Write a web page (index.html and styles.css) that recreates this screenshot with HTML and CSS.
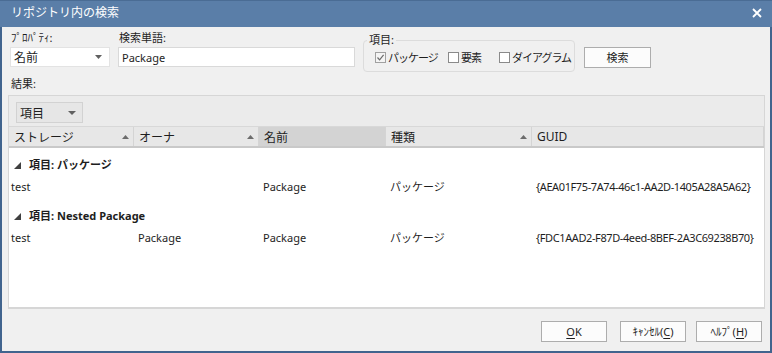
FILE: index.html
```html
<!DOCTYPE html>
<html lang="ja">
<head>
<meta charset="utf-8">
<title>リポジトリ内の検索</title>
<link rel="stylesheet" href="styles.css">
</head>
<body>
<div class="window">
  <div class="titlebar">
    <span class="title">リポジトリ内の検索</span>
    <svg class="close" width="10" height="10" viewBox="0 0 10 10"><path d="M1 1 L9 9 M9 1 L1 9" stroke="#ffffff" stroke-width="1.8" fill="none"/></svg>
  </div>
  <div class="content">
    <div class="toprow">
      <div class="field f-prop">
        <div class="label">ﾌﾟﾛﾊﾟﾃｨ:</div>
        <div class="select"><span>名前</span><svg class="arrow" width="7" height="4" viewBox="0 0 7 4"><path d="M0 0 H7 L3.5 4 Z" fill="#606060"/></svg></div>
      </div>
      <div class="field f-term">
        <div class="label">検索単語:</div>
        <div class="input">Package</div>
      </div>
      <fieldset class="group">
        <legend>項目:</legend>
        <div class="checks">
          <div class="check c1"><span class="box checked"><svg width="9" height="9" viewBox="0 0 9 9"><path d="M1.5 4.5 L3.6 6.8 L7.6 1.8" stroke="#6a6a6a" stroke-width="1.2" fill="none"/></svg></span><span class="clabel">パッケージ</span></div>
          <div class="check c2"><span class="box"></span><span class="clabel">要素</span></div>
          <div class="check c3"><span class="box"></span><span class="clabel">ダイアグラム</span></div>
        </div>
      </fieldset>
      <button class="btn search">検索</button>
    </div>
    <div class="results-label">結果:</div>
    <div class="panel">
      <div class="toolbar">
        <div class="tb-select"><span>項目</span><svg class="arrow" width="8" height="4" viewBox="0 0 8 4"><path d="M0 0 H8 L4 4 Z" fill="#606060"/></svg></div>
      </div>
      <div class="header cols">
        <div class="hcell"><span>ストレージ</span><svg class="sort" width="7" height="4" viewBox="0 0 7 4"><path d="M0 4 H7 L3.5 0 Z" fill="#6c6c6c"/></svg></div>
        <div class="hcell"><span>オーナ</span><svg class="sort" width="7" height="4" viewBox="0 0 7 4"><path d="M0 4 H7 L3.5 0 Z" fill="#6c6c6c"/></svg></div>
        <div class="hcell active"><span>名前</span></div>
        <div class="hcell"><span>種類</span><svg class="sort" width="7" height="4" viewBox="0 0 7 4"><path d="M0 4 H7 L3.5 0 Z" fill="#6c6c6c"/></svg></div>
        <div class="hcell last"><span>GUID</span></div>
      </div>
      <div class="tbody">
        <div class="grouphead"><svg class="tri" width="7" height="7" viewBox="0 0 7 7"><path d="M7 0 V7 H0 Z" fill="#404040"/></svg><span>項目: パッケージ</span></div>
        <div class="row cols">
          <div class="cell first">test</div>
          <div class="cell"></div>
          <div class="cell">Package</div>
          <div class="cell">パッケージ</div>
          <div class="cell guid">{AEA01F75-7A74-46c1-AA2D-1405A28A5A62}</div>
        </div>
        <div class="grouphead"><svg class="tri" width="7" height="7" viewBox="0 0 7 7"><path d="M7 0 V7 H0 Z" fill="#404040"/></svg><span>項目: Nested Package</span></div>
        <div class="row cols">
          <div class="cell first">test</div>
          <div class="cell">Package</div>
          <div class="cell">Package</div>
          <div class="cell">パッケージ</div>
          <div class="cell guid">{FDC1AAD2-F87D-4eed-8BEF-2A3C69238B70}</div>
        </div>
      </div>
    </div>
    <div class="footer">
      <button class="btn b-ok"><u>O</u>K</button>
      <button class="btn b-cancel">ｷｬﾝｾﾙ(<u>C</u>)</button>
      <button class="btn b-help">ﾍﾙﾌﾟ(<u>H</u>)</button>
    </div>
  </div>
</div>
</body>
</html>
```

FILE: styles.css
```css
* { box-sizing: border-box; }
html, body { margin: 0; padding: 0; }
body {
  width: 772px;
  height: 353px;
  overflow: hidden;
  font-family: "Noto Sans", "Noto Sans CJK JP", sans-serif;
  font-size: 11px;
  color: #1e1e1e;
  background: #f0f0f0;
}
.window {
  width: 772px;
  height: 353px;
  display: flex;
  flex-direction: column;
  background: #f0f0f0;
  border-left: 2px solid #41648e;
  border-right: 2px solid #41648e;
  border-bottom: 2px solid #41648e;
}
.titlebar {
  height: 27px;
  flex: none;
  margin: 0 -2px;
  background: #5a7ea8;
  border-top: 1px solid #4a6c94;
  display: flex;
  align-items: center;
  justify-content: space-between;
  padding: 0 10px 2px 11px;
  color: #ffffff;
}
.title { font-size: 12px; line-height: 16px; }
.close { display: block; margin-top: -1px; }
.content {
  flex: 1;
  display: flex;
  flex-direction: column;
  padding: 4px 5px 0 6px;
}
.toprow {
  display: flex;
  align-items: flex-start;
  padding-left: 2px;
  height: 43px;
}
.field { display: flex; flex-direction: column; }
.label { line-height: 14px; height: 14px; padding-left: 1px; margin-bottom: 2px; }
.f-prop { width: 100px; }
.f-term { width: 237px; margin-left: 8px; }
.select {
  height: 20px;
  background: #ffffff;
  border: 1px solid #e3e3e3;
  display: flex;
  align-items: center;
  justify-content: space-between;
  padding: 0 7px 0 3px;
  font-size: 12px;
}
.input {
  height: 20px;
  background: #ffffff;
  border: 1px solid #d9d9d9;
  display: flex;
  align-items: center;
  padding: 0 3px;
}
.group {
  margin: 2px 0 0 8px;
  padding: 0 0 5px 11px;
  width: 212px;
  min-width: 0;
  border: 1px solid #dcdcdc;
  border-radius: 4px;
}
.group legend {
  padding: 0 2px;
  margin-left: -8px;
  line-height: 14px;
}
.checks { display: flex; height: 18px; align-items: center; margin-top: 1px; }
.check { display: flex; align-items: center; white-space: nowrap; }
.clabel { letter-spacing: -1px; }
.c1 { width: 73px; }
.c2 { width: 51px; }
.box {
  width: 11px;
  height: 11px;
  flex: none;
  border: 1px solid #8a8a8a;
  background: #ffffff;
  margin-right: 2px;
  display: flex;
  align-items: center;
  justify-content: center;
}
.box.checked { border-color: #a0a0a0; background: #f4f4f4; }
.box svg { display: block; }
.btn {
  font-family: inherit;
  font-size: 11px;
  color: #1e1e1e;
  height: 21px;
  background: #fcfcfc;
  border: 1px solid #adadad;
  border-radius: 0;
  padding: 0;
  line-height: 19px;
}
.btn u { text-underline-offset: 2px; }
.search { width: 67px; margin: 16px 0 0 9px; }
.results-label { line-height: 14px; height: 14px; padding-left: 3px; margin: 3px 0 4px; }
.panel {
  height: 214px;
  border: 1px solid #d6d6d6;
  border-bottom-width: 2px;
  display: flex;
  flex-direction: column;
  background: #ffffff;
}
.toolbar {
  height: 31px;
  flex: none;
  background: #ebebeb;
  border-bottom: 1px solid #d8d8d8;
  padding: 6px 0 0 7px;
}
.tb-select {
  width: 67px;
  height: 21px;
  border: 1px solid #d2d2d2;
  background: #e6e6e6;
  display: flex;
  align-items: center;
  justify-content: space-between;
  padding: 0 6px 0 3px;
  font-size: 12px;
}
.cols {
  display: grid;
  grid-template-columns: 125px 125px 127px 146px 1fr;
}
.header {
  height: 21px;
  flex: none;
  background: #e7e7e7;
  border-bottom: 2px solid #c9c9c9;
}
.hcell {
  display: flex;
  align-items: center;
  justify-content: space-between;
  padding: 0 4px 0 5px;
  border-right: 1px solid #d4d4d4;
  font-size: 12px;
}
.hcell.active { background: #d3d3d3; }
.sort { display: block; }
.tbody { flex: 1; padding-top: 0; }
.grouphead {
  height: 22px;
  margin-top: 5px;
  display: flex;
  align-items: center;
  padding-left: 5px;
  font-weight: bold;
}
.row + .grouphead { margin-top: 7px; }
.grouphead .tri { margin-right: 8px; margin-top: 2px; }
.row { height: 22px; align-items: center; }
.cell { padding-left: 4px; white-space: nowrap; }
.cell.first { padding-left: 2px; }
.guid { padding-left: 4px; letter-spacing: -0.4px; }
.footer {
  display: flex;
  justify-content: flex-end;
  padding: 12px 3px 0 0;
}
.b-ok { width: 66px; margin-right: 13px; }
.b-cancel { width: 66px; margin-right: 10px; }
.b-help { width: 66px; }
```
